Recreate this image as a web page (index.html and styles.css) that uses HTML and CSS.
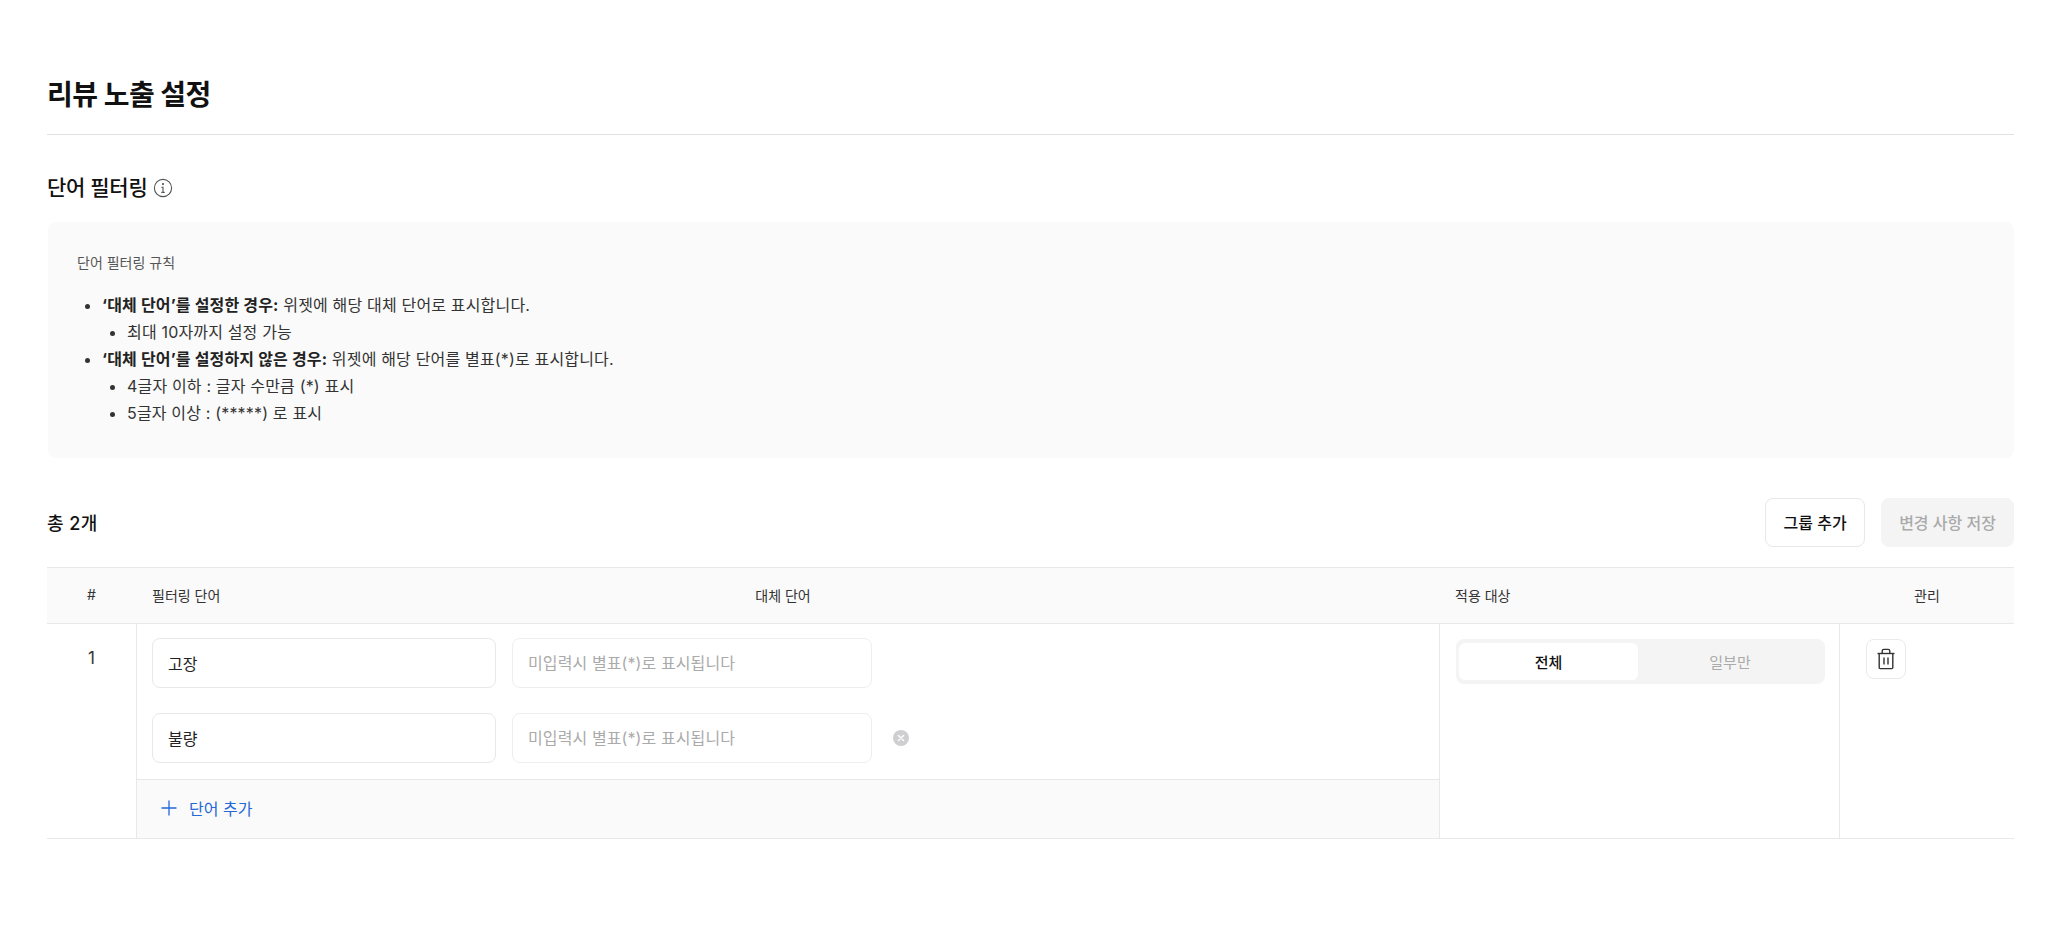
FILE: index.html
```html
<!DOCTYPE html>
<html lang="ko">
<head>
<meta charset="utf-8">
<title>리뷰 노출 설정</title>
<link rel="stylesheet" href="styles.css">
</head>
<body>
<main class="page">
  <header class="page-head"><h1>리뷰 노출 설정</h1></header>
  <h2 class="section-title">단어 필터링
    <svg class="info" viewBox="0 0 20 20" width="20" height="20" fill="none" stroke="#555" stroke-width="1.1" stroke-linecap="round"><circle cx="10" cy="10" r="8.6"/><path d="M10 9v5.4M8.8 9.2H10M8.8 14.4h2.4"/><circle cx="10" cy="6.1" r=".5" fill="#555"/></svg>
  </h2>
  <section class="rules">
    <p class="rules-title">단어 필터링 규칙</p>
    <ul class="rules-list">
      <li><b>‘대체 단어’를 설정한 경우:</b> 위젯에 해당 대체 단어로 표시합니다.
        <ul><li>최대 10자까지 설정 가능</li></ul>
      </li>
      <li><b>‘대체 단어’를 설정하지 않은 경우:</b> 위젯에 해당 단어를 별표(*)로 표시합니다.
        <ul><li>4글자 이하 : 글자 수만큼 (*) 표시</li><li>5글자 이상 : (*****) 로 표시</li></ul>
      </li>
    </ul>
  </section>
  <div class="toolbar">
    <strong class="total">총 2개</strong>
    <div class="actions">
      <button class="btn" type="button">그룹 추가</button>
      <button class="btn btn-disabled" type="button">변경 사항 저장</button>
    </div>
  </div>
  <div class="table">
    <div class="thead">
      <div class="th-num">#</div>
      <div class="th-words"><span class="th-word">필터링 단어</span><span class="th-alt">대체 단어</span></div>
      <div class="th-target">적용 대상</div>
      <div class="th-manage">관리</div>
    </div>
    <div class="tbody">
      <div class="td-num">1</div>
      <div class="td-words">
        <div class="word-rows">
          <div class="word-row">
            <input class="field" type="text" value="고장">
            <input class="field field-alt" type="text" placeholder="미입력시 별표(*)로 표시됩니다">
          </div>
          <div class="word-row">
            <input class="field" type="text" value="불량">
            <input class="field field-alt" type="text" placeholder="미입력시 별표(*)로 표시됩니다">
            <svg class="remove" viewBox="0 0 16 16" width="16" height="16"><circle cx="8" cy="8" r="8" fill="#cfcfd1"/><path d="M5.4 5.4l5.2 5.2M10.6 5.4l-5.2 5.2" stroke="#fff" stroke-width="1.4" stroke-linecap="round"/></svg>
          </div>
        </div>
        <div class="add-word">
          <svg viewBox="0 0 16 16" width="16" height="16" fill="none" stroke="#2468d8" stroke-width="1.3"><path d="M8 .5v15M.5 8h15"/></svg>
          <span>단어 추가</span>
        </div>
      </div>
      <div class="td-target">
        <div class="segment">
          <span class="seg seg-on">전체</span>
          <span class="seg">일부만</span>
        </div>
      </div>
      <div class="td-manage">
        <button class="trash" type="button" aria-label="삭제">
          <svg viewBox="0 0 20 22" width="20" height="22" fill="none" stroke="#333" stroke-width="1.4"><path d="M3.2 5.5V19.6a1 1 0 0 0 1 1h11.6a1 1 0 0 0 1-1V5.5"/><path d="M1.5 5.5h17"/><path d="M6.2 5.2V3A1.6 1.6 0 0 1 7.8 1.4h4.4A1.6 1.6 0 0 1 13.8 3v2.2"/><path d="M8 9.5v7M12 9.5v7"/></svg>
        </button>
      </div>
    </div>
  </div>
</main>
</body>
</html>
```
FILE: styles.css
```css
* { box-sizing: border-box; }
html, body { margin: 0; background: #fff; }
body {
  font-family: Inter, "Noto Sans CJK KR", sans-serif;
  color: #222;
  font-size: 16px;
}
.page { padding: 75px 34px 0 47px; }
.page-head { border-bottom: 1px solid #e2e2e2; padding-bottom: 19px; }
h1 { margin: 0; font-size: 28px; line-height: 40px; font-weight: 700; color: #111; letter-spacing: -0.5px; }
.section-title {
  display: flex; align-items: center; gap: 6px;
  margin: 38px 0 19px;
  font-size: 21px; line-height: 30px; font-weight: 500; color: #111; letter-spacing: -0.3px;
}
.rules { margin-left: 1px; background: #fafafa; border-radius: 8px; padding: 31px 29px 31px; }
.rules-title { margin: 0 0 19px; font-size: 14px; line-height: 20px; color: #555; }
.rules-list, .rules-list ul { margin: 0; padding: 0; list-style: disc; line-height: 27px; color: #333; letter-spacing: .17px; }
.rules-list { padding-left: 25px; }
.rules-list ul { padding-left: 25px; }
.rules-list b { font-weight: 700; color: #222; }
.toolbar { display: flex; justify-content: space-between; align-items: center; margin: 40px 0 20px; }
.total { padding-bottom: 2px; font-weight: 500; font-size: 18px; letter-spacing: .4px; color: #111; }
.actions { display: flex; gap: 16px; }
.btn {
  height: 49px; padding: 0 17.5px 2px; border: 1px solid #e8e8e8; border-radius: 8px; background: #fff;
  font: 500 16px Inter, "Noto Sans CJK KR", sans-serif; color: #111;
}
.btn-disabled { padding: 0 17px 2px; background: #f4f4f5; border-color: #f4f4f5; color: #aaa; }
.table { border-top: 1px solid #e8e8e8; border-bottom: 1px solid #e8e8e8; }
.thead {
  display: grid; grid-template-columns: 89px 1303px 401px 174px;
  height: 56px; padding-bottom: 2px; align-items: center; background: #fafafa; border-bottom: 1px solid #e8e8e8;
  font-size: 14px; color: #333;
}
.th-num { text-align: center; }
.th-words { display: flex; padding-left: 16px; }
.th-word { width: 68px; white-space: nowrap; }
.th-alt { width: 1126px; text-align: center; }
.th-target { padding-left: 16px; }
.th-manage { text-align: center; }
.tbody { display: grid; grid-template-columns: 89px 1303px 401px 174px; height: 214px; }
.td-num { text-align: center; padding-top: 21px; line-height: 26px; font-size: 17px; color: #333; }
.td-words { border-left: 1px solid #e8e8e8; display: flex; flex-direction: column; }
.word-rows { flex: 1; display: flex; flex-direction: column; gap: 25px; padding: 14px 15px 0; }
.word-row { display: flex; align-items: center; gap: 16px; }
.field {
  width: 344px; height: 50px; padding: 0 15px; border: 1px solid #e8e8e8; border-radius: 8px; background: #fff;
  font: 400 16px Inter, "Noto Sans CJK KR", sans-serif; letter-spacing: .1px; color: #222; outline: none;
}
.field-alt { width: 360px; border-color: #eee; }
.field::placeholder { color: #aaa; opacity: 1; }
.remove { margin-left: 5px; }
.add-word {
  height: 59px; padding: 0 0 2px 24px; display: flex; align-items: center; gap: 12px;
  background: #fafafa; border-top: 1px solid #e8e8e8; color: #2468d8;
}
.td-target { border-left: 1px solid #e8e8e8; border-right: 1px solid #e8e8e8; padding: 15px 14px 0 16px; }
.segment { display: flex; height: 45px; padding: 4px 3px; background: #f4f4f5; border-radius: 8px; }
.seg { flex: 1; display: flex; align-items: center; justify-content: center; color: #aaa; border-radius: 6px; font-size: 15px; }
.seg-on { background: #fff; color: #111; font-weight: 500; flex: 0 0 179px; }
.td-manage { padding: 15px 0 0 26px; }
.trash { width: 40px; height: 40px; padding: 0; display: flex; align-items: center; justify-content: center; background: #fff; border: 1px solid #eaeaea; border-radius: 8px; }
```
